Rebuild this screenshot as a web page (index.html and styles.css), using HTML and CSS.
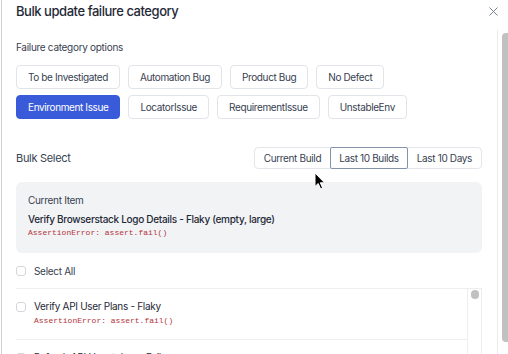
FILE: index.html
```html
<!DOCTYPE html>
<html>
<head>
<meta charset="utf-8">
<link rel="stylesheet" href="styles.css">
</head>
<body>
<div class="modal">
  <header class="header">
    <h1 class="title">Bulk update failure category</h1>
    <svg class="close" width="9" height="9" viewBox="0 0 9 9"><path d="M0.5 0.5 L8.5 8.5 M8.5 0.5 L0.5 8.5" stroke="#7b818a" stroke-width="1" fill="none"/></svg>
  </header>
  <div class="scroller">
    <div class="content">
      <div class="label">Failure category options</div>
      <div class="options">
        <div class="opt-row">
          <button class="opt">To be Investigated</button>
          <button class="opt">Automation Bug</button>
          <button class="opt">Product Bug</button>
          <button class="opt">No Defect</button>
        </div>
        <div class="opt-row">
          <button class="opt active">Environment Issue</button>
          <button class="opt">LocatorIssue</button>
          <button class="opt">RequirementIssue</button>
          <button class="opt">UnstableEnv</button>
        </div>
      </div>
      <div class="bulk-row">
        <div class="bulk-title">Bulk Select</div>
        <div class="segmented">
          <span class="seg">Current Build</span>
          <span class="seg selected">Last 10 Builds</span>
          <span class="seg">Last 10 Days</span>
        </div>
      </div>
      <div class="current">
        <div class="current-label">Current Item</div>
        <div class="current-name">Verify Browserstack Logo Details - Flaky (empty, large)</div>
        <div class="err">AssertionError: assert.fail()</div>
      </div>
      <div class="select-all">
        <span class="check"></span>
        <span class="sa-text">Select All</span>
      </div>
      <div class="list">
        <div class="items">
          <div class="item">
            <span class="check"></span>
            <div class="item-body">
              <div class="item-name">Verify API User Plans - Flaky</div>
              <div class="err">AssertionError: assert.fail()</div>
            </div>
          </div>
          <div class="item">
            <span class="check"></span>
            <div class="item-body">
              <div class="item-name">Refresh API User token - Fail</div>
              <div class="err">AssertionError: assert.fail()</div>
            </div>
          </div>
        </div>
        <div class="list-scroll"><div class="list-thumb"></div></div>
      </div>
    </div>
    <div class="vscroll"><div class="vthumb"></div></div>
  </div>
  <svg class="cursor" width="12" height="18" viewBox="0 0 12 18"><path d="M1 1 L1 14.5 L4.2 11.5 L6.6 16.8 L8.6 15.9 L6.3 10.8 L10.6 10.8 Z" fill="#000" stroke="#fff" stroke-width="1" stroke-linejoin="round"/></svg>
</div>
</body>
</html>
```
FILE: styles.css
```css
* { box-sizing: border-box; }
html, body { margin: 0; padding: 0; background: #fff; }
body {
  width: 508px;
  height: 354px;
  overflow: hidden;
  font-family: Inter, "Noto Sans", sans-serif;
  color: #374151;
  letter-spacing: -0.3px;
  padding-left: 1px;
}
.modal {
  position: relative;
  height: 354px;
  border-left: 1px solid #cdd1d6;
  display: flex;
  flex-direction: column;
}
.header {
  height: 30px;
  display: flex;
  align-items: flex-start;
  justify-content: space-between;
  padding: 0 10px 0 14px;
  flex: none;
}
.title {
  margin: 0;
  font-size: 13px;
  font-weight: 500;
  letter-spacing: -0.45px;
  color: #1f2937;
  line-height: 22px;
}
.close { margin-top: 7px; }
.scroller {
  flex: 1;
  display: flex;
  min-height: 0;
  overflow: hidden;
}
.content {
  flex: 1;
  padding: 10px 15px 0 14px;
  min-width: 0;
}
.label {
  font-size: 10px;
  line-height: 14px;
  color: #374151;
}
.options {
  margin-top: 11px;
  display: flex;
  flex-direction: column;
  gap: 6px;
}
.opt-row { display: flex; gap: 8px; }
.opt {
  height: 24px;
  padding: 0 11px;
  border: 1px solid #e1e4e8;
  border-radius: 4px;
  background: #fff;
  font-family: inherit;
  font-size: 10px;
  letter-spacing: -0.38px;
  color: #374151;
  cursor: pointer;
}
.opt.active {
  background: #3a5bd9;
  border-color: #3a5bd9;
  color: #fff;
}
.bulk-row {
  margin-top: 28px;
  height: 22px;
  display: flex;
  align-items: center;
  justify-content: space-between;
}
.bulk-title { font-size: 11px; color: #374151; }
.segmented {
  display: flex;
  height: 22px;
  border: 1px solid #e3e6ea;
  border-radius: 4px;
}
.seg {
  display: flex;
  align-items: center;
  padding: 0 8px;
  font-size: 10px;
  letter-spacing: -0.35px;
  color: #374151;
  border: 1px solid transparent;
  margin: -1px 0;
}
.seg.selected {
  border-color: #8593a9;
  border-radius: 2px;
}
.current {
  margin-top: 13px;
  background: #f1f3f5;
  border-radius: 6px;
  padding: 11px 12px 13px;
  height: 71px;
}
.current-label { font-size: 10px; line-height: 14px; color: #374151; }
.current-name {
  margin-top: 4px;
  font-size: 10px;
  line-height: 16px;
  font-weight: 500;
  color: #1f2937;
}
.err {
  font-family: "Liberation Mono", "DejaVu Sans Mono", monospace;
  font-size: 8px;
  line-height: 12px;
  letter-spacing: 0;
  color: #b4343a;
}
.select-all {
  height: 35px;
  display: flex;
  align-items: center;
  gap: 8px;
}
.check {
  width: 10px;
  height: 10px;
  border: 1px solid #d3d6db;
  border-radius: 3px;
  flex: none;
  background: #fff;
}
.sa-text { font-size: 10px; color: #374151; }
.list {
  display: flex;
  border-top: 1px solid #eceef0;
  border-right: 1px solid #eceef0;
  height: 80px;
}
.items { flex: 1; min-width: 0; }
.item {
  display: flex;
  gap: 8px;
  padding: 10px 0 12px;
  border-bottom: 1px solid #eceef0;
}
.item .check { margin-top: 3px; }
.item-name { font-size: 10px; line-height: 14px; color: #1f2937; }
.item-body .err { margin-top: 2px; }
.list-scroll {
  width: 14px;
  flex: none;
  border-left: 1px solid #eceef0;
  padding: 1px 2px 0 3px;
}
.list-thumb {
  height: 9px;
  background: #c1c1c1;
  border-radius: 4px;
}
.vscroll {
  width: 11px;
  flex: none;
  border-left: 1px solid #ebebeb;
  padding: 3px 0 0 4px;
  overflow: hidden;
}
.vthumb {
  width: 10px;
  height: 309px;
  background: #c1c1c1;
  border-radius: 4px;
}
.cursor {
  position: absolute;
  left: 312px;
  top: 172px;
}
```
